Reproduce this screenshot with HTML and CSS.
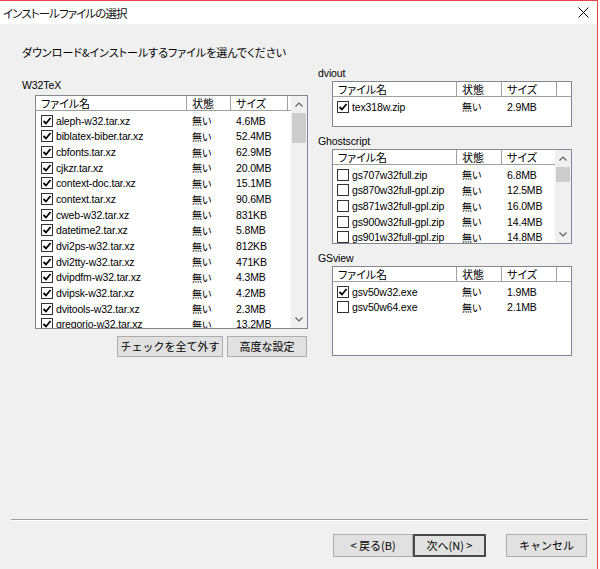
FILE: index.html
```html
<!DOCTYPE html>
<html lang="ja">
<head>
<meta charset="utf-8">
<title>インストールファイルの選択</title>
<link rel="stylesheet" href="styles.css">
</head>
<body>
<div class="window">
  <div class="titlebar">
    <span class="title">インストールファイルの選択</span>
    <span class="close"><svg width="11" height="11" viewBox="0 0 11 11"><path d="M0.5 0.5 L10.5 10.5 M10.5 0.5 L0.5 10.5" stroke="#000" stroke-width="1" fill="none"/></svg></span>
  </div>
  <div class="content">
    <p class="intro">ダウンロード&amp;インストールするファイルを選んでください</p>
    <div class="columns">
      <section class="col-left">
        <div class="group-label">W32TeX</div>
        <div class="listbox lb-main">
          <div class="lv">
            <div class="lv-head"><span class="h c-name">ファイル名</span><span class="h c-state">状態</span><span class="h c-size">サイズ</span><span class="h c-rest"></span></div>
            <div class="lv-body">
              <div class="row"><span class="c-name"><span class="cb on"><svg viewBox="0 0 10 10"><path d="M1.5 5 L4 7.5 L8.5 2" /></svg></span>aleph-w32.tar.xz</span><span class="c-state">無い</span><span class="c-size">4.6MB</span></div>
              <div class="row"><span class="c-name"><span class="cb on"><svg viewBox="0 0 10 10"><path d="M1.5 5 L4 7.5 L8.5 2" /></svg></span>biblatex-biber.tar.xz</span><span class="c-state">無い</span><span class="c-size">52.4MB</span></div>
              <div class="row"><span class="c-name"><span class="cb on"><svg viewBox="0 0 10 10"><path d="M1.5 5 L4 7.5 L8.5 2" /></svg></span>cbfonts.tar.xz</span><span class="c-state">無い</span><span class="c-size">62.9MB</span></div>
              <div class="row"><span class="c-name"><span class="cb on"><svg viewBox="0 0 10 10"><path d="M1.5 5 L4 7.5 L8.5 2" /></svg></span>cjkzr.tar.xz</span><span class="c-state">無い</span><span class="c-size">20.0MB</span></div>
              <div class="row"><span class="c-name"><span class="cb on"><svg viewBox="0 0 10 10"><path d="M1.5 5 L4 7.5 L8.5 2" /></svg></span>context-doc.tar.xz</span><span class="c-state">無い</span><span class="c-size">15.1MB</span></div>
              <div class="row"><span class="c-name"><span class="cb on"><svg viewBox="0 0 10 10"><path d="M1.5 5 L4 7.5 L8.5 2" /></svg></span>context.tar.xz</span><span class="c-state">無い</span><span class="c-size">90.6MB</span></div>
              <div class="row"><span class="c-name"><span class="cb on"><svg viewBox="0 0 10 10"><path d="M1.5 5 L4 7.5 L8.5 2" /></svg></span>cweb-w32.tar.xz</span><span class="c-state">無い</span><span class="c-size">831KB</span></div>
              <div class="row"><span class="c-name"><span class="cb on"><svg viewBox="0 0 10 10"><path d="M1.5 5 L4 7.5 L8.5 2" /></svg></span>datetime2.tar.xz</span><span class="c-state">無い</span><span class="c-size">5.8MB</span></div>
              <div class="row"><span class="c-name"><span class="cb on"><svg viewBox="0 0 10 10"><path d="M1.5 5 L4 7.5 L8.5 2" /></svg></span>dvi2ps-w32.tar.xz</span><span class="c-state">無い</span><span class="c-size">812KB</span></div>
              <div class="row"><span class="c-name"><span class="cb on"><svg viewBox="0 0 10 10"><path d="M1.5 5 L4 7.5 L8.5 2" /></svg></span>dvi2tty-w32.tar.xz</span><span class="c-state">無い</span><span class="c-size">471KB</span></div>
              <div class="row"><span class="c-name"><span class="cb on"><svg viewBox="0 0 10 10"><path d="M1.5 5 L4 7.5 L8.5 2" /></svg></span>dvipdfm-w32.tar.xz</span><span class="c-state">無い</span><span class="c-size">4.3MB</span></div>
              <div class="row"><span class="c-name"><span class="cb on"><svg viewBox="0 0 10 10"><path d="M1.5 5 L4 7.5 L8.5 2" /></svg></span>dvipsk-w32.tar.xz</span><span class="c-state">無い</span><span class="c-size">4.2MB</span></div>
              <div class="row"><span class="c-name"><span class="cb on"><svg viewBox="0 0 10 10"><path d="M1.5 5 L4 7.5 L8.5 2" /></svg></span>dvitools-w32.tar.xz</span><span class="c-state">無い</span><span class="c-size">2.3MB</span></div>
              <div class="row"><span class="c-name"><span class="cb on"><svg viewBox="0 0 10 10"><path d="M1.5 5 L4 7.5 L8.5 2" /></svg></span>gregorio-w32.tar.xz</span><span class="c-state">無い</span><span class="c-size">13.2MB</span></div>
            </div>
          </div>
          <div class="vscroll">
            <span class="arrow"><svg width="8" height="5" viewBox="0 0 8 5"><path d="M0.5 4.5 L4 1 L7.5 4.5" /></svg></span>
            <span class="track"><span class="thumb thumb-main"></span></span>
            <span class="arrow"><svg width="8" height="5" viewBox="0 0 8 5"><path d="M0.5 0.5 L4 4 L7.5 0.5" /></svg></span>
          </div>
        </div>
        <div class="btnrow">
          <button class="btn btn-uncheck">チェックを全て外す</button>
          <button class="btn btn-adv">高度な設定</button>
        </div>
      </section>

      <section class="col-right">
        <div class="group-label">dviout</div>
        <div class="listbox lb-small lb-dviout">
          <div class="lv">
            <div class="lv-head"><span class="h r-name">ファイル名</span><span class="h r-state">状態</span><span class="h r-size">サイズ</span><span class="h r-rest"></span></div>
            <div class="lv-body">
              <div class="row"><span class="r-name"><span class="cb on"><svg viewBox="0 0 10 10"><path d="M1.5 5 L4 7.5 L8.5 2" /></svg></span>tex318w.zip</span><span class="r-state">無い</span><span class="r-size">2.9MB</span></div>
            </div>
          </div>
        </div>

        <div class="group-label gap">Ghostscript</div>
        <div class="listbox lb-small lb-gs">
          <div class="lv">
            <div class="lv-head"><span class="h r-name">ファイル名</span><span class="h r-state">状態</span><span class="h r-size">サイズ</span></div>
            <div class="lv-body">
              <div class="row"><span class="r-name"><span class="cb"></span>gs707w32full.zip</span><span class="r-state">無い</span><span class="r-size">6.8MB</span></div>
              <div class="row"><span class="r-name"><span class="cb"></span>gs870w32full-gpl.zip</span><span class="r-state">無い</span><span class="r-size">12.5MB</span></div>
              <div class="row"><span class="r-name"><span class="cb"></span>gs871w32full-gpl.zip</span><span class="r-state">無い</span><span class="r-size">16.0MB</span></div>
              <div class="row"><span class="r-name"><span class="cb"></span>gs900w32full-gpl.zip</span><span class="r-state">無い</span><span class="r-size">14.4MB</span></div>
              <div class="row"><span class="r-name"><span class="cb"></span>gs901w32full-gpl.zip</span><span class="r-state">無い</span><span class="r-size">14.8MB</span></div>
            </div>
          </div>
          <div class="vscroll">
            <span class="arrow"><svg width="8" height="5" viewBox="0 0 8 5"><path d="M0.5 4.5 L4 1 L7.5 4.5" /></svg></span>
            <span class="track"><span class="thumb thumb-gs"></span></span>
            <span class="arrow"><svg width="8" height="5" viewBox="0 0 8 5"><path d="M0.5 0.5 L4 4 L7.5 0.5" /></svg></span>
          </div>
        </div>

        <div class="group-label gap">GSview</div>
        <div class="listbox lb-small lb-gsv">
          <div class="lv">
            <div class="lv-head"><span class="h r-name">ファイル名</span><span class="h r-state">状態</span><span class="h r-size">サイズ</span><span class="h r-rest"></span></div>
            <div class="lv-body">
              <div class="row"><span class="r-name"><span class="cb on"><svg viewBox="0 0 10 10"><path d="M1.5 5 L4 7.5 L8.5 2" /></svg></span>gsv50w32.exe</span><span class="r-state">無い</span><span class="r-size">1.9MB</span></div>
              <div class="row"><span class="r-name"><span class="cb"></span>gsv50w64.exe</span><span class="r-state">無い</span><span class="r-size">2.1MB</span></div>
            </div>
          </div>
        </div>
      </section>
    </div>

    <footer class="footer">
      <div class="separator"></div>
      <div class="navrow">
        <button class="btn btn-back">&lt; 戻る(B)</button>
        <button class="btn btn-next">次へ(N) &gt;</button>
        <button class="btn btn-cancel">キャンセル</button>
      </div>
    </footer>
  </div>
</div>
</body>
</html>
```

FILE: styles.css
```css
html, body {
  margin: 0;
  padding: 0;
  background: #ffffff;
}

body {
  font-family: "Liberation Sans", "Noto Sans CJK JP", sans-serif;
  font-size: 11px;
  color: #000;
  font-feature-settings: "palt";
}

.window {
  width: 598px;
  height: 569px;
  box-sizing: border-box;
  border-top: 1px solid #e8464b;
  border-right: 1px solid #e8464b;
  background: #f0f0f0;
  display: flex;
  flex-direction: column;
  overflow: hidden;
}

.titlebar {
  height: 23px;
  background: #ffffff;
  display: flex;
  align-items: center;
  justify-content: space-between;
  padding: 0 8px 0 3px;
  flex: none;
}

.title {
  font-family: "Noto Sans CJK JP", sans-serif;
  font-size: 11.5px;
  letter-spacing: -0.9px;
  color: #111;
}

.close {
  display: flex;
  width: 11px;
  height: 11px;
}

.content {
  flex: 1;
  display: flex;
  flex-direction: column;
  padding-top: 20px;
}

.intro {
  margin: 0 0 0 22px;
  line-height: 16px;
  font-family: "Noto Sans CJK JP", sans-serif;
  font-size: 11px;
}

.columns {
  display: flex;
  align-items: flex-start;
  padding-left: 22px;
}

.col-left {
  width: 296px;
  padding-top: 17px;
  flex: none;
}

.col-right {
  padding-top: 5px;
  flex: none;
}

.group-label {
  line-height: 16px;
  height: 16px;
  font-size: 10.5px;
  letter-spacing: -0.1px;
}

.col-left .group-label {
  margin-bottom: 2px;
}

.group-label.gap {
  margin-top: 6px;
}

.listbox {
  display: flex;
  box-sizing: border-box;
  border: 1px solid #828790;
  background: #ffffff;
  overflow: hidden;
}

.lb-main {
  margin-left: 13px;
  width: 273px;
  height: 234px;
}

.lb-small {
  margin-left: 14px;
  width: 240px;
}

.lb-dviout { height: 46px; }
.lb-gs { height: 95px; }
.lb-gsv { height: 90px; }

.lv {
  flex: 1;
  min-width: 0;
  display: flex;
  flex-direction: column;
  overflow: hidden;
}

.lv-head {
  display: flex;
  height: 15px;
  box-sizing: border-box;
  border-bottom: 1px solid #a0a0a0;
  flex: none;
}

.h {
  box-sizing: border-box;
  border-right: 1px solid #a0a0a0;
  padding-left: 5px;
  line-height: 14px;
  font-family: "Noto Sans CJK JP", sans-serif;
  font-size: 11px;
  white-space: nowrap;
  overflow: hidden;
}

.h.c-rest, .h.r-rest {
  border-right: none;
  flex: 1;
}

.lv-body {
  padding-top: 2px;
  overflow: hidden;
}

.row {
  display: flex;
  align-items: center;
  height: 15.67px;
  white-space: nowrap;
}

.row > span {
  box-sizing: border-box;
  display: flex;
  align-items: center;
  font-size: 10.5px;
  letter-spacing: -0.15px;
  overflow: hidden;
}

.c-name { width: 151px; flex: none; }
.c-state { width: 44px; flex: none; }
.c-size { width: 57px; flex: none; }

.r-name { width: 124px; flex: none; }
.r-state { width: 45px; flex: none; }
.r-size { width: 55px; flex: none; }

.row .c-name { padding-left: 5px; }
.row .r-name { padding-left: 4px; }
.row .c-state, .row .r-state { padding-left: 5px; font-family: "Noto Sans CJK JP", sans-serif; font-size: 10px; }
.row .c-size, .row .r-size { padding-left: 5px; }

.cb {
  width: 12px;
  height: 12px;
  box-sizing: border-box;
  border: 1px solid #333333;
  background: #ffffff;
  margin-right: 3px;
  flex: none;
  display: flex;
  align-items: center;
  justify-content: center;
}

.cb svg {
  width: 10px;
  height: 10px;
}

.cb svg path {
  fill: none;
  stroke: #000;
  stroke-width: 1.8;
}

.vscroll {
  width: 16px;
  flex: none;
  background: #f0f0f0;
  display: flex;
  flex-direction: column;
}

.arrow {
  height: 17px;
  flex: none;
  display: flex;
  align-items: center;
  justify-content: center;
}

.arrow path {
  fill: none;
  stroke: #606060;
  stroke-width: 1.2;
}

.track {
  flex: 1;
  display: flex;
  flex-direction: column;
  align-items: center;
}

.thumb {
  width: 14px;
  background: #cdcdcd;
}

.thumb-main { height: 30px; }
.thumb-gs { height: 15px; }

.btnrow {
  display: flex;
  justify-content: flex-end;
  gap: 4px;
  margin-left: 13px;
  width: 272px;
  margin-top: 7px;
}

.btn {
  box-sizing: border-box;
  background: #e1e1e1;
  border: 1px solid #adadad;
  font-family: "Noto Sans CJK JP", sans-serif;
  font-size: 11px;
  color: #000;
  padding: 0;
  margin: 0;
  line-height: 1;
}

.btn-uncheck { width: 106px; height: 21px; }
.btn-adv { width: 80px; height: 21px; }

.footer {
  margin-top: auto;
  padding-bottom: 12px;
}

.separator {
  margin: 0 9px 0 11px;
  height: 2px;
  box-sizing: border-box;
  border-top: 1px solid #a0a0a0;
  border-bottom: 1px solid #ffffff;
}

.navrow {
  display: flex;
  justify-content: flex-end;
  padding-right: 10px;
  margin-top: 13px;
}

.btn-back { width: 80px; height: 23px; }
.btn-next { width: 73px; height: 23px; border: 2px solid #4a4a4a; }
.btn-cancel { width: 81px; height: 23px; margin-left: 20px; }
```
